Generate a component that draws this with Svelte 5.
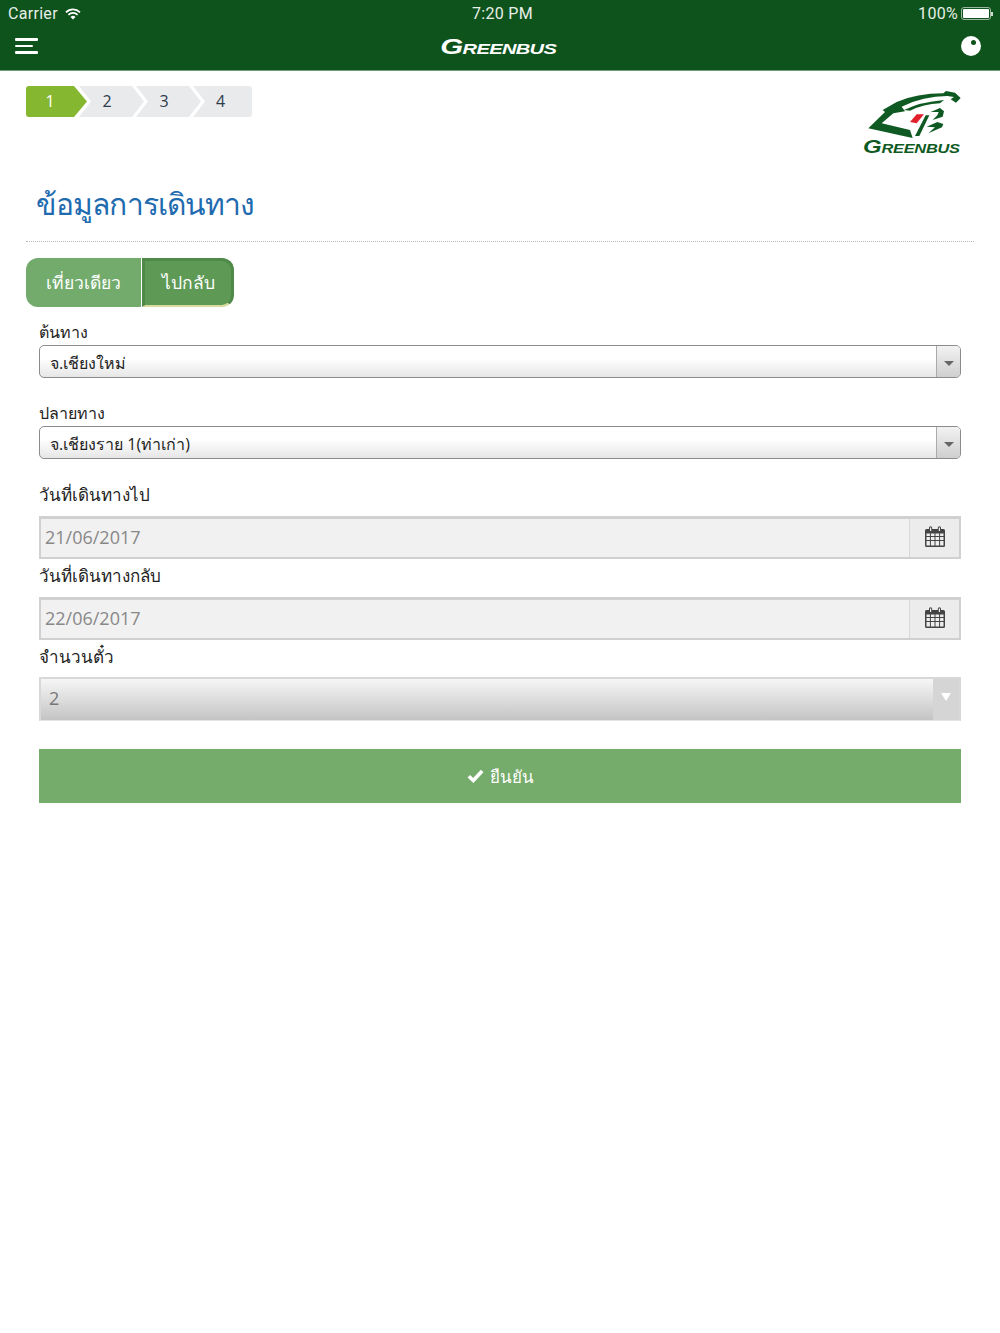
<script>
  const steps = [1, 2, 3, 4];
</script>

{#snippet calendar()}
  <svg class="cal" viewBox="0 0 20 21" width="20" height="21">
    <path fill="#444" d="M1.5 3H4V1.800a1.600 1.600 0 0 1 3.200 0V3h5.600V1.800a1.600 1.600 0 0 1 3.200 0V3h2.500A1.500 1.500 0 0 1 20 4.500v15a1.500 1.500 0 0 1-1.500 1.500h-17A1.500 1.500 0 0 1 0 19.500v-15A1.500 1.500 0 0 1 1.500 3z" />
    <path fill="#f0f0f0" d="M5 1.500h1.200v3.500H5zM13.800 1.500H15v3.500h-1.200z" />
    <path fill="#eee" d="M1.500 7.500h3.400v2.600H1.500zM5.900 7.500h3.600v2.600H5.900zM10.500 7.500h3.600v2.600h-3.600zM15.100 7.500h3.400v2.600h-3.400zM1.500 11.100h3.400v2.900H1.500zM5.900 11.100h3.600v2.900H5.900zM10.500 11.100h3.600v2.900h-3.600zM15.100 11.100h3.400v2.900h-3.400zM1.500 15h3.400v4.500H1.500zM5.900 15h3.600v4.500H5.900zM10.500 15h3.600v4.500h-3.600zM15.100 15h3.400v4.500h-3.400z" />
  </svg>
{/snippet}

<div class="page">
  <header class="topbar">
    <div class="status">
      <div class="status-left">
        <span>Carrier</span>
        <svg viewBox="0 0 16 12" width="16" height="12">
          <path fill="none" stroke="#fff" stroke-width="1.700" d="M1 4.300a10 10 0 0 1 14 0M3.400 6.800a6.600 6.600 0 0 1 9.200 0" />
          <path fill="#fff" d="M8 11.500 5.500 9a3.500 3.500 0 0 1 5 0z" />
        </svg>
      </div>
      <div class="status-time">7:20 PM</div>
      <div class="status-right">
        <span>100%</span>
        <span class="battery"><span class="battery-fill"></span></span>
        <span class="battery-tip"></span>
      </div>
    </div>
    <div class="navbar">
      <button class="menu-btn" aria-label="menu">
        <span></span><span class="short"></span><span></span>
      </button>
      <div class="brand">Greenbus</div>
      <div class="ball"><span></span></div>
    </div>
  </header>

  <main class="content">
    <div class="top-row">
      <ol class="steps">
        {#each steps as step, i}
          <li class="step" class:active={i === 0} class:first={i === 0} class:last={i === steps.length - 1}>{step}</li>
        {/each}
      </ol>
      <div class="logo">
        <svg viewBox="0 0 315 156" width="105" height="52">
          <g fill="#0f5a22">
            <path d="M25 127 75 78 68 72 110 48Q170 22 250 22L258 15 285 20 302 36 288 50 272 40 282 33 262 30Q190 30 125 62L135 76 100 82 65 112 150 132 158 156 130 150Z" />
            <path d="M132 72Q180 48 252 42L240 52Q190 55 150 74Z" />
            <path d="M212 78 240 66 252 76 248 92 218 102 232 88 236 78Z" />
            <path d="M200 122 232 108 250 114 246 124 205 142 225 124Z" />
            <path d="M197 88H208L178 150H165Z" />
          </g>
          <path fill="#e2202c" d="M150 108 170 85H192L170 112Z" />
        </svg>
        <div class="logo-word">Greenbus</div>
      </div>
    </div>

    <h1>ข้อมูลการเดินทาง</h1>

    <div class="trip-toggle">
      <button class="trip">เที่ยวเดียว</button>
      <button class="trip selected">ไปกลับ</button>
    </div>

    <form class="form" on:submit|preventDefault>
      <div class="field select-field">
        <label for="from">ต้นทาง</label>
        <div id="from" class="select">
          <span>จ.เชียงใหม่</span>
          <span class="handle"><i></i></span>
        </div>
      </div>

      <div class="field select-field second">
        <label for="to">ปลายทาง</label>
        <div id="to" class="select">
          <span>จ.เชียงราย 1(ท่าเก่า)</span>
          <span class="handle"><i></i></span>
        </div>
      </div>

      <div class="field date-field first-date">
        <label for="depart">วันที่เดินทางไป</label>
        <div id="depart" class="date">
          <span class="date-value">21/06/2017</span>
          <span class="addon">{@render calendar()}</span>
        </div>
      </div>

      <div class="field date-field">
        <label for="return">วันที่เดินทางกลับ</label>
        <div id="return" class="date">
          <span class="date-value">22/06/2017</span>
          <span class="addon">{@render calendar()}</span>
        </div>
      </div>

      <div class="field date-field seats-field">
        <label for="seats">จำนวนตั๋ว</label>
        <div id="seats" class="seats">
          <span>2</span>
          <span class="seats-handle"><i></i></span>
        </div>
      </div>

      <button class="confirm" type="submit">
        <svg viewBox="0 0 17 14" width="17" height="14">
          <path fill="none" stroke="#fff" stroke-width="3.600" d="M1.800 7.200 6.300 11.500 15.200 2" />
        </svg>
        ยืนยัน
      </button>
    </form>
  </main>
</div>

<style>
  :global(body) {
    margin: 0;
    background: #fff;
  }

  .page {
    width: 1000px;
    min-height: 1333px;
    font-family: "Open Sans", "Noto Sans", "DejaVu Sans", sans-serif;
    color: #333;
  }

  .topbar {
    height: 71px;
    box-sizing: border-box;
    background: #0e521c;
    color: #fff;
    border-bottom: 1px solid #6f9c78;
  }

  .status {
    height: 27px;
    display: grid;
    grid-template-columns: 1fr auto 1fr;
    align-items: center;
    padding: 0 7px 0 8px;
    font-family: "Roboto", "Liberation Sans", sans-serif;
    font-size: 16px;
    letter-spacing: 0.3px;
    color: #e8efe8;
  }

  .status-left {
    display: flex;
    align-items: center;
    gap: 7px;
  }

  .status-time {
    margin-left: 4px;
  }

  .status-right {
    display: flex;
    align-items: center;
    justify-content: flex-end;
    gap: 3px;
  }

  .battery {
    display: block;
    width: 26px;
    height: 9px;
    padding: 1px;
    border: 1px solid #9db8a1;
    border-radius: 3px;
  }

  .battery-fill {
    display: block;
    height: 100%;
    background: #fff;
    border-radius: 1px;
  }

  .battery-tip {
    width: 2px;
    height: 4px;
    margin-left: -3px;
    background: #cfdcd1;
  }

  .navbar {
    height: 42px;
    display: grid;
    grid-template-columns: 1fr auto 1fr;
    align-items: center;
    padding: 0 19px 0 15px;
  }

  .menu-btn {
    display: flex;
    flex-direction: column;
    gap: 4px;
    width: 23px;
    padding: 0;
    border: 0;
    background: none;
    margin-bottom: 4px;
  }

  .menu-btn span {
    display: block;
    width: 23px;
    height: 2.500px;
    background: #fff;
    border-radius: 1px;
  }

  .menu-btn .short {
    width: 18px;
  }

  .brand,
  .logo-word {
    font-family: "Liberation Sans", sans-serif;
    font-style: italic;
    font-weight: 700;
    font-variant: small-caps;
    text-transform: lowercase;
    white-space: nowrap;
  }

  .brand {
    font-size: 22px;
    line-height: 26px;
    letter-spacing: -0.5px;
    margin-bottom: 2px;
    transform: scaleX(1.34);
  }

  .brand::first-letter,
  .logo-word::first-letter {
    text-transform: uppercase;
  }

  .ball {
    justify-self: end;
    width: 20px;
    height: 20px;
    border-radius: 50%;
    background: #fff;
    margin-bottom: 4px;
    position: relative;
  }

  .ball span {
    position: absolute;
    top: 4px;
    left: 10px;
    width: 5px;
    height: 5px;
    border-radius: 50%;
    background: #0e521c;
  }

  .content {
    padding: 0 26px;
  }

  .top-row {
    display: flex;
    justify-content: space-between;
    align-items: flex-start;
    height: 86px;
    box-sizing: border-box;
    padding: 15px 9px 0 0;
  }

  .steps {
    display: flex;
    list-style: none;
    margin: 0;
    padding: 0;
  }

  .step {
    width: 65px;
    height: 31px;
    margin-right: -8px;
    padding-right: 9px;
    box-sizing: border-box;
    background: #e9eaec;
    color: #2f3a4a;
    font-size: 16px;
    line-height: 31px;
    text-align: center;
    clip-path: polygon(0 0, 53px 0, 65px 50%, 53px 100%, 0 100%, 12px 50%);
  }

  .step.first {
    width: 61px;
    padding-right: 13px;
    border-radius: 3px 0 0 3px;
    clip-path: polygon(0 0, 48px 0, 61px 50%, 48px 100%, 0 100%);
  }

  .step.last {
    width: 59px;
    padding-right: 4px;
    border-radius: 0 3px 3px 0;
    clip-path: polygon(0 0, 100% 0, 100% 100%, 0 100%, 12px 50%);
  }

  .step.active {
    background: #86b731;
    color: #fff;
  }

  .logo {
    width: 105px;
  }

  .logo svg {
    display: block;
  }

  .logo-word {
    font-size: 19px;
    line-height: 20px;
    letter-spacing: -0.2px;
    color: #0f5a22;
    margin: -1px 0 0 3px;
    transform: scaleX(1.26);
    transform-origin: left center;
  }

  h1 {
    margin: 0;
    padding: 0 0 0 10px;
    height: 85px;
    box-sizing: border-box;
    border-bottom: 1px dotted #bbb;
    font-weight: 400;
    font-size: 30px;
    letter-spacing: -0.9px;
    line-height: 94px;
    color: #1f6bb0;
  }

  .trip-toggle {
    display: flex;
    margin-top: 16px;
    height: 49px;
  }

  .trip {
    border: 0;
    margin: 0;
    padding: 0;
    background: #72ab6c;
    color: #fff;
    font: inherit;
    font-size: 17.500px;
    width: 115px;
    border-radius: 12px 0 0 12px;
  }

  .trip.selected {
    width: 92px;
    margin-left: 1px;
    background: #5e9a56;
    border: 3px solid #4f8a48;
    border-bottom: 2px solid #d8dca0;
    border-radius: 0 12px 12px 0;
  }

  .form {
    padding: 0 13px;
  }

  .field label {
    display: block;
    font-size: 17px;
    color: #222;
  }

  .select-field {
    margin-top: 15px;
  }

  .select-field label {
    height: 23px;
    line-height: 20px;
    font-size: 16px;
  }

  .select-field.second {
    margin-top: 25px;
  }

  .select {
    height: 33px;
    box-sizing: border-box;
    display: flex;
    align-items: center;
    justify-content: space-between;
    border: 1px solid #8c8c8c;
    border-radius: 5px;
    background: linear-gradient(#fff 40%, #e6e6e6);
    font-size: 16px;
    color: #222;
    padding-left: 10px;
  }

  .select > span:first-child {
    padding-top: 3px;
  }

  .handle {
    width: 23px;
    height: 100%;
    display: flex;
    align-items: center;
    justify-content: center;
    border-left: 1px solid #aaa;
    background: linear-gradient(#f2f2f2, #cfcfcf);
    border-radius: 0 4px 4px 0;
  }

  .handle i {
    border: 5px solid transparent;
    border-top: 5px solid #666;
    border-bottom: 0;
    margin-top: 3px;
  }

  .date-field label {
    line-height: 34px;
    height: 38px;
  }

  .first-date {
    margin-top: 19px;
  }

  .seats-field label {
    height: 37px;
  }

  .date {
    height: 43px;
    box-sizing: border-box;
    display: flex;
    border: 2px solid #d0d0d0;
    border-top-width: 3px;
    background: #f1f1f1;
    color: #888;
    font-size: 18px;
  }

  .date-value {
    flex: 1;
    line-height: 36px;
    padding-left: 4px;
  }

  .addon {
    width: 49px;
    box-sizing: content-box;
    padding-bottom: 3px;
    display: flex;
    align-items: center;
    justify-content: center;
    border-left: 1px solid #d8d8d8;
    background: #ececec;
  }

  .seats {
    height: 44px;
    box-sizing: border-box;
    display: flex;
    justify-content: space-between;
    border: 2px solid #d8d8d8;
    border-bottom: 1px solid #e4e4e4;
    background: linear-gradient(#f6f6f6, #c4c4c4);
    color: #777;
    font-size: 18px;
    line-height: 39px;
    padding-left: 8px;
  }

  .seats-handle {
    width: 26px;
    background: #d5d5d5;
    display: flex;
    justify-content: center;
    padding-top: 14px;
    box-sizing: border-box;
  }

  .seats-handle i {
    width: 0;
    height: 0;
    border: 5px solid transparent;
    border-top: 8px solid #fff;
    border-bottom: 0;
  }

  .confirm {
    display: flex;
    align-items: center;
    justify-content: center;
    gap: 6px;
    width: 100%;
    height: 54px;
    margin-top: 28px;
    border: 0;
    background: #75ab6b;
    color: #fff;
    font: inherit;
    font-size: 17px;
  }
</style>
